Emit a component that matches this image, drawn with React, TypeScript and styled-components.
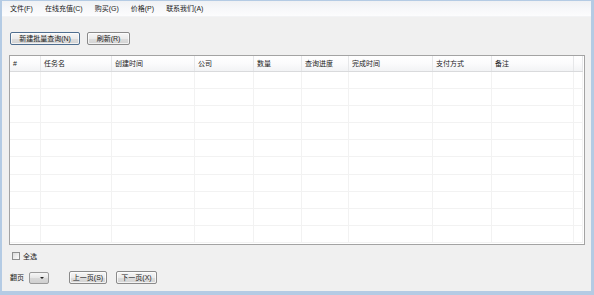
import React from "react";
import styled, { createGlobalStyle } from "styled-components";

const Global = createGlobalStyle`
  html, body { margin: 0; padding: 0; background: #f0f0f0; }
  body { font-family: "Liberation Sans", "Noto Sans CJK SC", sans-serif; }
  * { box-sizing: border-box; }
`;

const Window = styled.div`
  width: 594px;
  height: 295px;
  background: #f0f0f0;
  border-style: solid;
  border-color: #b4cbe4;
  border-width: 1px 3px 4px 2px;
  display: flex;
  flex-direction: column;
  font-size: 7px;
  color: #1a1a1a;
`;

const MenuBar = styled.div`
  height: 16px;
  display: flex;
  align-items: center;
  gap: 12px;
  padding-left: 8px;
  background: linear-gradient(#eff1f4, #f7f8fa 55%, #fcfcfd);
  border-bottom: 1px solid #f2f3f5;
`;

const MenuItem = styled.span`
  line-height: 1;
  white-space: nowrap;
`;

const Toolbar = styled.div`
  display: flex;
  gap: 7px;
  padding: 15px 0 0 8px;
`;

const Button = styled.div<{ $w: number; $default?: boolean }>`
  width: ${(p) => p.$w}px;
  height: 13px;
  display: flex;
  align-items: center;
  justify-content: center;
  white-space: nowrap;
  border: 1px solid ${(p) => (p.$default ? "#4f6e8f" : "#8a8a8a")};
  border-radius: 2px;
  background: linear-gradient(#f6f6f6, #ebebeb 50%, #dddddd 51%, #d3d3d3);
  box-shadow: inset 0 0 0 1px rgba(255, 255, 255, 0.7);
  line-height: 1;
`;

const Table = styled.div`
  margin: 10px 0 0 7px;
  width: 576px;
  height: 190px;
  border: 1px solid #a3a3a3;
  background: #fff;
  display: flex;
  flex-direction: column;
  padding: 0 1px 1px 0;
`;

const cols = "31px 71px 83px 59px 48px 47px 84px 59px 82px 1fr";

const HeaderRow = styled.div`
  height: 16px;
  display: grid;
  grid-template-columns: ${cols};
  background: linear-gradient(#ffffff, #fbfbfc 50%, #f2f3f5);
  border-bottom: 1px solid #d9dadc;
`;

const HeaderCell = styled.div`
  display: flex;
  align-items: center;
  padding-left: 3px;
  border-right: 1px solid #e6e7e9;
  white-space: nowrap;
  line-height: 1;
`;

const Body = styled.div`
  flex: 1;
  display: flex;
  flex-direction: column;
`;

const Row = styled.div`
  flex: 1;
  display: grid;
  grid-template-columns: ${cols};
  border-bottom: 1px solid #f2f2f2;
`;

const Cell = styled.div`
  border-right: 1px solid #f2f2f2;
`;

const CheckRow = styled.div`
  display: flex;
  align-items: center;
  gap: 3px;
  padding: 7px 0 0 10px;
  line-height: 1;
`;

const CheckBox = styled.div`
  width: 8px;
  height: 8px;
  border: 1px solid #8e8f8f;
  background: linear-gradient(135deg, #dcdcdc, #fdfdfd);
`;

const Pager = styled.div`
  display: flex;
  align-items: center;
  padding: 11px 0 0 8px;
  line-height: 1;
`;

const PagerLabel = styled.span`
  margin-right: 5px;
`;

const Combo = styled.div`
  width: 20px;
  height: 12px;
  border: 1px solid #9a9a9a;
  border-radius: 2px;
  background: linear-gradient(#f6f6f6, #e6e6e6 50%, #d8d8d8 51%, #d0d0d0);
  display: flex;
  align-items: center;
  justify-content: flex-end;
  padding-right: 4px;
  margin-right: 20px;
`;

const Arrow = styled.div`
  width: 0;
  height: 0;
  border-left: 2px solid transparent;
  border-right: 2px solid transparent;
  border-top: 2px solid #222;
`;

const PagerButtons = styled.div`
  display: flex;
  gap: 9px;
`;

const headers = ["#", "任务名", "创建时间", "公司", "数量", "查询进度", "完成时间", "支付方式", "备注", ""];

export default function App() {
  return (
    <>
      <Global />
      <Window>
        <MenuBar>
          <MenuItem>文件(F)</MenuItem>
          <MenuItem>在线充值(C)</MenuItem>
          <MenuItem>购买(G)</MenuItem>
          <MenuItem>价格(P)</MenuItem>
          <MenuItem>联系我们(A)</MenuItem>
        </MenuBar>
        <Toolbar>
          <Button $w={70} $default>新建批量查询(N)</Button>
          <Button $w={43}>刷新(R)</Button>
        </Toolbar>
        <Table>
          <HeaderRow>
            {headers.map((h, i) => (
              <HeaderCell key={i}>{h}</HeaderCell>
            ))}
          </HeaderRow>
          <Body>
            {Array.from({ length: 10 }).map((_, r) => (
              <Row key={r}>
                {headers.map((_, i) => (
                  <Cell key={i} />
                ))}
              </Row>
            ))}
          </Body>
        </Table>
        <CheckRow>
          <CheckBox />
          <span>全选</span>
        </CheckRow>
        <Pager>
          <PagerLabel>翻页</PagerLabel>
          <Combo>
            <Arrow />
          </Combo>
          <PagerButtons>
            <Button $w={38}>上一页(S)</Button>
            <Button $w={41}>下一页(X)</Button>
          </PagerButtons>
        </Pager>
      </Window>
    </>
  );
}
